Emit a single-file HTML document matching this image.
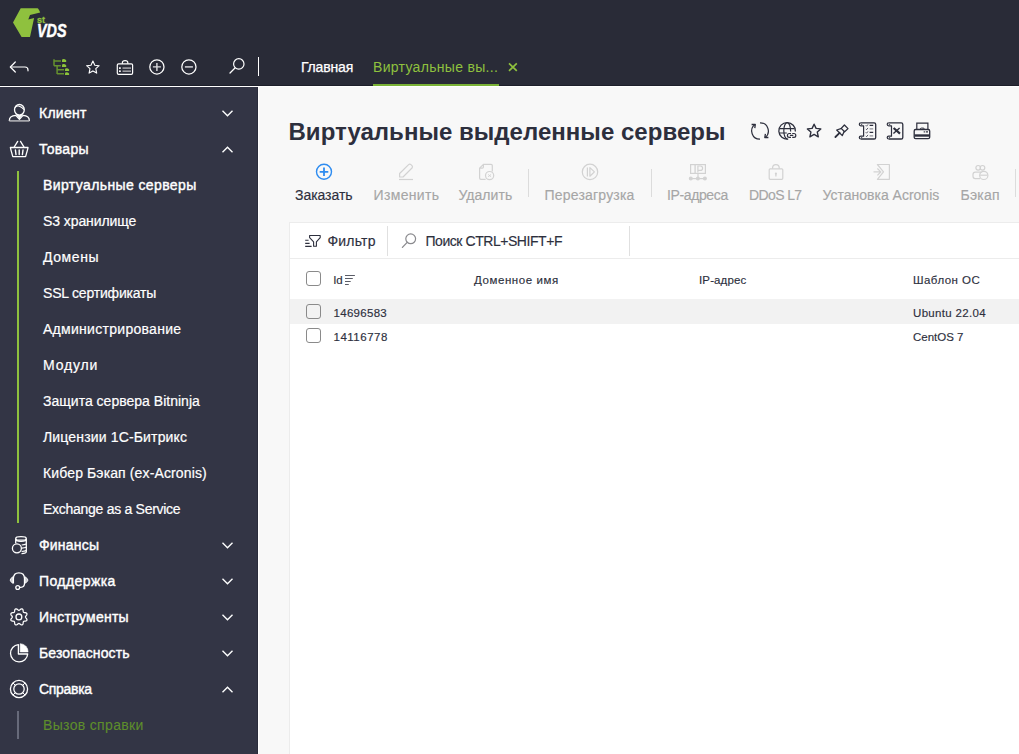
<!DOCTYPE html>
<html><head><meta charset="utf-8">
<style>
*{box-sizing:border-box;margin:0;padding:0}
html,body{width:1019px;height:754px;overflow:hidden;background:#fff;font-family:"Liberation Sans",sans-serif}
#top{position:absolute;left:0;top:0;width:1019px;height:86px;background:#292b37;border-bottom:1px solid #1d1f2a}
#side{position:absolute;left:0;top:87px;width:258px;height:667px;background:#333545;border-right:1px solid #2a2c3b}
#main{position:absolute;left:259px;top:87px;width:760px;height:667px;background:#f8f8f8}
.abs{position:absolute}
.ti{position:absolute;top:0}
.nav{position:absolute;left:39px;color:#fff;font-size:14px;-webkit-text-stroke:0.4px #fff;white-space:nowrap;line-height:16px}
.t{position:absolute;white-space:nowrap;line-height:1.143em;-webkit-text-stroke:0.15px currentColor}
.cb{position:absolute;width:15px;height:15px;border:1.3px solid #8a8a8a;border-radius:3px;background:transparent}
.sub{position:absolute;left:43px;color:#fff;font-size:14px;white-space:nowrap;line-height:16px;-webkit-text-stroke:0.2px currentColor}
</style></head><body>
<div id="top">
<svg class="abs" style="left:0;top:0" width="80" height="45" viewBox="0 0 80 45">
<path d="M20.7 8.2 L37.4 8.2 Q38.6 8.4 40.2 12.4 L30 15 L28.3 19.4 L34.1 18 L30 37 L21.6 37 L13 22.4 Z" fill="#8fc13e"/>
<text x="37" y="23.1" font-family="Liberation Sans" font-weight="bold" font-size="9.5" fill="#8fc13e" stroke="#8fc13e" stroke-width="0.3" textLength="8" lengthAdjust="spacingAndGlyphs">st</text>
<text x="37" y="36.9" font-family="Liberation Sans" font-weight="bold" font-style="italic" font-size="17.5" fill="#fff" stroke="#fff" stroke-width="0.5" textLength="29.5" lengthAdjust="spacingAndGlyphs">VDS</text>
</svg>
<svg class="abs" style="left:0;top:50px" width="270" height="36" viewBox="0 50 270 36" fill="none" stroke="#fff" stroke-width="1.3">
<!-- back arrow -->
<path d="M10.5 67 H25 Q28 67 28 70 V70.8" stroke-linecap="round" stroke-width="1.2"/>
<path d="M15.3 62 L10.3 67 L15.3 72" stroke-linecap="round" stroke-linejoin="round" stroke-width="1.2"/>
<!-- tree -->
<g stroke="#66922f" stroke-width="1.5">
<path d="M54 59.2 V65.8 M54 60.9 H60.9 M54 65.7 H60.9 M57.1 65.8 V74.1 M57.1 69.8 H64 M57.1 73.8 H64"/>
</g>
<g fill="#8cc43a" stroke="none">
<path d="M62 61.9 V60.4 Q62 59.1 63.6 59.1 Q65 59.1 66.2 60.3 V61.9 Z"/>
<path d="M62 66.9 V65.4 Q62 64.1 63.6 64.1 Q65 64.1 66.2 65.3 V66.9 Z"/>
<path d="M65 70.9 V69.5 Q65 68.2 66.6 68.2 Q68 68.2 69.1 69.4 V70.9 Z"/>
<path d="M65 74.9 V73.5 Q65 72.2 66.6 72.2 Q68 72.2 69.1 73.4 V74.9 Z"/>
</g>
<!-- star -->
<path d="M92.9 61.1 L94.8 65.3 L99.2 65.7 L95.8 68.7 L96.7 73.1 L92.9 70.9 L89.1 73.1 L90 68.7 L86.6 65.7 L91 65.3 Z" stroke-linejoin="round" stroke-width="1.1"/>
<!-- briefcase -->
<rect x="117.3" y="63.8" width="15.3" height="10.6" rx="1.3" stroke-width="1.2"/>
<path d="M122.4 63.8 V62.6 Q122.4 60.7 125.1 60.7 Q127.8 60.7 127.8 62.6 V63.8" stroke-width="1.2"/>
<g fill="#fff" stroke="none"><rect x="119" y="67.3" width="1.8" height="1.6"/><rect x="119" y="70.4" width="1.8" height="1.6"/></g>
<g fill="#9d9da3" stroke="none"><rect x="122.5" y="67.3" width="8.5" height="1.6"/><rect x="122.5" y="70.4" width="8.5" height="1.6"/></g>
<!-- plus -->
<circle cx="156.9" cy="66.9" r="7.1" stroke-width="1.25"/><path d="M156.9 62.9 V70.9 M152.9 66.9 H160.9" stroke-width="1.4" stroke="#dcdce0"/>
<!-- minus -->
<circle cx="188.9" cy="66.9" r="7.1" stroke-width="1.25"/><path d="M184.9 66.9 H192.9" stroke-width="1.5" stroke="#d4d4d8"/>
<!-- search -->
<circle cx="238.8" cy="63.9" r="5.2" stroke-width="1.2"/><path d="M235 68 L230 73" stroke-width="1.3" stroke-linecap="round"/>
<path d="M258.5 57 V76" stroke-width="1"/>
</svg>
<div class="abs" style="left:301px;top:59px;font-size:14px;color:#fff;-webkit-text-stroke:0.25px #fff;letter-spacing:-0.17px">Главная</div>
<div class="abs" style="left:373px;top:59px;font-size:14px;color:#8fc13e;letter-spacing:0.31px">Виртуальные вы...</div>
<svg class="abs" style="left:506px;top:61px" width="14" height="12"><path d="M3 2.3 L10.8 9.9 M10.8 2.3 L3 9.9" stroke="#8fc13e" stroke-width="1.7"/></svg>
<div class="abs" style="left:373px;top:84px;width:126px;height:2px;background:#7ab236"></div>
</div>
<div id="side">
<svg class="abs" style="left:0;top:0" width="40" height="667" viewBox="0 87 40 667" fill="none" stroke="#fff" stroke-width="1.3">
<!-- person -->
<ellipse cx="19.4" cy="109.8" rx="4.9" ry="5.3"/>
<path d="M15 107.6 Q16.8 105.6 18.6 106 Q21.5 106.8 24.2 109.6" stroke-width="1.1"/>
<path d="M9.3 121 Q9.3 115.6 15.8 115.4 L19.4 119.2 L23 115.4 Q29.4 115.6 29.4 121" stroke-linejoin="round"/>
<path d="M9.3 120.9 H29.4" stroke="#b8b8bc" stroke-width="1.5"/>
<path d="M16.3 114.6 L19.4 118.2 L22.5 114.6 Q19.4 116 16.3 114.6 Z" fill="#fff" stroke-width="0.8"/>
<!-- basket -->
<path d="M14.3 146.8 L17.7 141.4 M20.5 141.4 L23.9 146.8" stroke-linecap="round"/>
<path d="M10.4 147.5 H28 L27.5 149.8 L25.6 156.6 H12.8 L10.9 149.8 Z" stroke-linejoin="round"/>
<path d="M15.4 150 L16 154.6 M19.2 150 V154.6 M23 150 L22.4 154.6" stroke-width="1.4" stroke-linecap="round"/>
<!-- finance -->
<ellipse cx="21" cy="538.4" rx="5.3" ry="1.8" stroke-width="1.2"/>
<path d="M15.7 538.4 V543.4 M26.3 538.4 V551.8 Q26.3 553.4 21.5 553.6" stroke-width="1.3"/>
<path d="M15.8 540.4 Q21 542.6 26.2 540.4" stroke-width="1.2"/>
<path d="M21.6 545 Q24.5 544.8 26.2 544 M21.9 548.2 Q24.5 548 26.2 547.3 M21.6 551.5 Q24.5 551.3 26.2 550.6" stroke-width="1.2"/>
<circle cx="16.9" cy="548.3" r="4.5" stroke-width="1.3"/>
<!-- headset -->
<path d="M13.4 583.4 V578.6 Q13.4 572.8 18.9 572.8 Q24.5 572.8 24.5 578.6 V583.6 Q24.5 587.2 20.8 587.4 H19.7" stroke-width="1.3"/>
<path d="M12.8 576.8 Q10.2 578.6 10.2 580.1 Q10.2 581.7 12.8 583.2 Z M25.1 576.8 Q27.9 578.6 27.9 580.1 Q27.9 581.7 25.1 583.2 Z" fill="#c9c9cf" stroke-width="0.9" stroke-linejoin="round"/>
<circle cx="17.7" cy="587.5" r="1.9" stroke-width="1.3"/>
<!-- gear -->
<circle cx="18.9" cy="616.9" r="2.9" stroke-width="1.3"/>
<path d="M25.45 616.90 L25.53 617.25 L25.76 617.62 L26.09 618.04 L26.44 618.50 L26.75 619.00 L26.94 619.51 L26.95 619.99 L26.78 620.41 L26.43 620.74 L25.94 620.96 L25.37 621.10 L24.79 621.18 L24.26 621.24 L23.84 621.34 L23.53 621.53 L23.34 621.84 L23.24 622.26 L23.18 622.79 L23.10 623.37 L22.96 623.94 L22.74 624.43 L22.41 624.78 L21.99 624.95 L21.51 624.94 L21.00 624.75 L20.50 624.44 L20.04 624.09 L19.62 623.76 L19.25 623.53 L18.90 623.45 L18.55 623.53 L18.18 623.76 L17.76 624.09 L17.30 624.44 L16.80 624.75 L16.29 624.94 L15.81 624.95 L15.39 624.78 L15.06 624.43 L14.84 623.94 L14.70 623.37 L14.62 622.79 L14.56 622.26 L14.46 621.84 L14.27 621.53 L13.96 621.34 L13.54 621.24 L13.01 621.18 L12.43 621.10 L11.86 620.96 L11.37 620.74 L11.02 620.41 L10.85 619.99 L10.86 619.51 L11.05 619.00 L11.36 618.50 L11.71 618.04 L12.04 617.62 L12.27 617.25 L12.35 616.90 L12.27 616.55 L12.04 616.18 L11.71 615.76 L11.36 615.30 L11.05 614.80 L10.86 614.29 L10.85 613.81 L11.02 613.39 L11.37 613.06 L11.86 612.84 L12.43 612.70 L13.01 612.62 L13.54 612.56 L13.96 612.46 L14.27 612.27 L14.46 611.96 L14.56 611.54 L14.62 611.01 L14.70 610.43 L14.84 609.86 L15.06 609.37 L15.39 609.02 L15.81 608.85 L16.29 608.86 L16.80 609.05 L17.30 609.36 L17.76 609.71 L18.18 610.04 L18.55 610.27 L18.90 610.35 L19.25 610.27 L19.62 610.04 L20.04 609.71 L20.50 609.36 L21.00 609.05 L21.51 608.86 L21.99 608.85 L22.41 609.02 L22.74 609.37 L22.96 609.86 L23.10 610.43 L23.18 611.01 L23.24 611.54 L23.34 611.96 L23.53 612.27 L23.84 612.46 L24.26 612.56 L24.79 612.62 L25.37 612.70 L25.94 612.84 L26.43 613.06 L26.78 613.39 L26.95 613.81 L26.94 614.29 L26.75 614.80 L26.44 615.30 L26.09 615.76 L25.76 616.18 L25.53 616.55 Z" stroke-width="1.25" stroke-linejoin="round"/>
<!-- pie -->
<path d="M18.4 644.7 A8.6 8.6 0 1 0 27.7 654 H18.4 Z" stroke-linejoin="round"/>
<path d="M20.2 643.7 A8.1 8.1 0 0 1 28.1 651.9 H20.2 Z" fill="#fff" stroke-width="0.6"/>
<!-- lifebuoy -->
<circle cx="19" cy="689" r="8.6"/>
<circle cx="19" cy="689" r="5.2"/>
<path d="M13 683 L15.3 685.3 M25 683 L22.7 685.3 M13 695 L15.3 692.7 M25 695 L22.7 692.7" stroke-width="1"/>
</svg>
<svg class="abs" style="left:215px;top:0" width="30" height="667" viewBox="215 87 30 667" fill="none" stroke="#fff" stroke-width="1.35">
<path d="M222.5 110.8 L227.5 115.8 L232.5 110.8"/>
<path d="M222.5 152.2 L227.5 147.2 L232.5 152.2"/>
<path d="M222.5 542.8 L227.5 547.8 L232.5 542.8"/>
<path d="M222.5 578.8 L227.5 583.8 L232.5 578.8"/>
<path d="M222.5 614.8 L227.5 619.8 L232.5 614.8"/>
<path d="M222.5 650.8 L227.5 655.8 L232.5 650.8"/>
<path d="M222.5 692.2 L227.5 687.2 L232.5 692.2"/>
</svg>
<div class="abs" style="left:17px;top:84px;width:2px;height:352px;background:#8fc13e"></div>
<div class="abs" style="left:17px;top:624px;width:2px;height:28px;background:#676a7a"></div>
<div class="nav" style="top:18px;letter-spacing:0.268px">Клиент</div>
<div class="nav" style="top:54px;letter-spacing:0.281px">Товары</div>
<div class="nav" style="top:450px;letter-spacing:0.198px">Финансы</div>
<div class="nav" style="top:486px;letter-spacing:0.406px">Поддержка</div>
<div class="nav" style="top:522px;letter-spacing:0.237px">Инструменты</div>
<div class="nav" style="top:558px;letter-spacing:0.108px">Безопасность</div>
<div class="nav" style="top:594px;letter-spacing:-0.306px">Справка</div>
<div class="sub" style="top:90px;letter-spacing:0.389px;-webkit-text-stroke:0.4px #fff">Виртуальные серверы</div>
<div class="sub" style="top:126px;letter-spacing:-0.081px">S3 хранилище</div>
<div class="sub" style="top:162px;letter-spacing:0.587px">Домены</div>
<div class="sub" style="top:198px;letter-spacing:-0.194px">SSL сертификаты</div>
<div class="sub" style="top:234px;letter-spacing:0.287px">Администрирование</div>
<div class="sub" style="top:270px;letter-spacing:0.814px">Модули</div>
<div class="sub" style="top:306px;letter-spacing:0.012px">Защита сервера Bitninja</div>
<div class="sub" style="top:342px;letter-spacing:0.155px">Лицензии 1С-Битрикс</div>
<div class="sub" style="top:378px;letter-spacing:0.126px">Кибер Бэкап (ex-Acronis)</div>
<div class="sub" style="top:414px;letter-spacing:-0.28px">Exchange as a Service</div>
<div class="sub" style="top:630px;color:#5e8d2c;letter-spacing:0.334px;-webkit-text-stroke:0.1px #5e8d2c">Вызов справки</div>
</div>
<div id="main"></div>
<div class="abs" style="left:289px;top:222px;width:730px;height:532px;background:#fff;border-left:1px solid #ececec;border-top:1px solid #ececec"></div>
<div class="abs" style="left:290px;top:258px;width:729px;height:1px;background:#ececec"></div>
<div class="abs" style="left:290px;top:299px;width:729px;height:25px;background:#f2f2f2"></div>
<div class="t" style="left:288.5px;top:118px;font-size:24px;font-weight:bold;letter-spacing:0.03px;-webkit-text-stroke:0;color:#2d2f3d">Виртуальные выделенные серверы</div>
<svg class="abs" style="left:740px;top:115px" width="200" height="30" viewBox="740 115 200 30" fill="none" stroke="#2d2f3d" stroke-width="1.3">
<!-- refresh -->
<path d="M754.9 124.5 A8.2 8.2 0 0 0 760 139.2" stroke-width="1.2"/>
<path d="M751.6 124.5 H755.3 L754.8 128.2" stroke-linejoin="round"/>
<path d="M760 122.8 A8.2 8.2 0 0 1 765.1 137.5" stroke-width="1.2"/>
<path d="M768.4 137.5 H764.8 L765.4 133.8" stroke-linejoin="round"/>
<!-- globe -->
<path d="M795.4 131.5 A8.3 8.3 0 1 0 788.2 139.1" stroke-width="1.25"/>
<path d="M790.6 131.6 V130.8 A3.4 8.1 0 0 0 783.8 130.8 A3.4 8.1 0 0 0 787.5 138.9" stroke-width="1.2"/>
<path d="M779.6 128.6 H794.4 M779.3 133 H786.8" stroke-width="1.2"/>
<path d="M791 133.5 H789.3 Q787.4 133.5 787.4 135.4 Q787.4 137.3 789.3 137.3 H791 M792.2 133.5 H793.9 Q795.8 133.5 795.8 135.4 Q795.8 137.3 793.9 137.3 H792.2 M789.9 135.4 H793.3" stroke-width="1.2"/>
<!-- star -->
<path d="M814.1 124.2 L816.1 128.4 L820.8 128.9 L817.3 132.1 L818.3 136.8 L814.1 134.4 L809.9 136.8 L810.9 132.1 L807.4 128.9 L812.1 128.4 Z" stroke-linejoin="round" stroke-width="1.4"/>
<!-- pin -->
<path d="M839.6 132.8 L835.4 137" stroke-width="1.8" stroke-linecap="round"/>
<path d="M841.6 128.3 L836.7 130 L842.3 135.6 L844.3 131.2" stroke-linejoin="round" stroke-width="1.3"/>
<path d="M844.4 125 L848 128.6 L844.6 131.8 L841.2 128.4 Z" stroke-linejoin="round" stroke-width="1.3"/>
<!-- checklist scroll -->
<path d="M860.8 122.8 H874.1 Q875.7 122.8 875.7 124.4 V137.4 Q875.7 139 874.1 139 H860.8" stroke-width="1.3"/>
<path d="M860.8 122.8 Q859.3 122.8 859.3 124.3 Q859.3 125.8 860.8 125.8 H863.6 V136.2 H860.8 Q859.3 136.2 859.3 137.6 Q859.3 139 860.8 139" stroke-width="1.2" stroke-linejoin="round"/>
<path d="M860.6 124.9 L861.6 123.9 L862.6 124.9 Z M860.6 137.1 L861.6 138.1 L862.6 137.1 Z" fill="#2d2f3d" stroke="none"/>
<g stroke-width="0.8"><path d="M865.8 125.4 L866.6 126.2 L868 124.4 M865.8 128.9 L866.6 129.7 L868 127.9 M865.8 132.4 L866.6 133.2 L868 131.4 M865.8 135.9 L866.6 136.7 L868 134.9"/></g>
<path d="M869.6 125.4 H873.2 M869.6 132.4 H873.2" stroke-width="1.1"/>
<path d="M869.6 128.9 H873.2 M869.6 135.9 H873.2" stroke-width="1.1" stroke="#8d8e96"/>
<!-- excel scroll -->
<path d="M888.7 122.8 H901.2 Q902.8 122.8 902.8 124.4 V137.4 Q902.8 139 901.2 139 H888.7" stroke-width="1.3"/>
<path d="M888.7 122.8 Q887.2 122.8 887.2 124.3 Q887.2 125.8 888.7 125.8 H891.5 V136.2 H888.7 Q887.2 136.2 887.2 137.6 Q887.2 139 888.7 139" stroke-width="1.2" stroke-linejoin="round"/>
<path d="M888.5 124.9 L889.5 123.9 L890.5 124.9 Z M888.5 137.1 L889.5 138.1 L890.5 137.1 Z" fill="#2d2f3d" stroke="none"/>
<path d="M893.6 128 L900 133.6" stroke-width="2.2"/>
<path d="M899.6 128 L893.4 133.6" stroke-width="1.4"/>
<!-- printer -->
<path d="M916.8 129.5 V123.2 H927.9 V129.5" stroke-width="1.2"/>
<path d="M915.6 129.5 H928.2 Q929.7 129.5 929.7 131 V137.2 Q929.7 138.6 928.2 138.6 H915.6 Q914.2 138.6 914.2 137.2 V131 Q914.2 129.5 915.6 129.5 Z" stroke-width="1.3"/>
<path d="M914.5 135.5 H929.5" stroke-width="2.4"/>
<path d="M920.2 129.5 Q920.2 128.1 921.4 128.1 H923.2 Q924.4 128.1 924.4 129.5" stroke-width="1"/>
<path d="M923.7 131.9 H924.9 M925.8 131.9 H928" stroke-width="1.1"/>
</svg>
<!-- toolbar -->
<svg class="abs" style="left:290px;top:155px" width="729" height="50" viewBox="290 155 729 50" fill="none" stroke="#d2d2d2" stroke-width="1.2">
<circle cx="324" cy="171.8" r="7.5" stroke="#2e8cf0" stroke-width="1.4"/>
<path d="M319.7 171.8 H328.3 M324 167.5 V176.1" stroke="#2e8cf0" stroke-width="1.8"/>
<!-- pencil -->
<path d="M399.6 177 V173.5 L408.6 164.6 Q409.8 163.6 410.9 164.6 L412 165.7 Q413 166.8 412 168 L403 177 Z" stroke-linejoin="round"/>
<path d="M399 179.5 H413"/>
<!-- delete doc -->
<path d="M483.4 164.3 H491 Q492.3 164.3 492.3 165.6 V171.4 M485.6 179.3 H481 Q479.6 179.3 479.6 177.9 V168.1 L483.4 164.3 V167 Q483.4 168.1 482.3 168.1 H479.6" stroke-linejoin="round"/>
<circle cx="489.6" cy="175.6" r="4.1"/>
<path d="M488.1 174.4 L491.1 176.8 M491.1 174.4 L488.1 176.8" stroke-width="0.9"/>
<!-- restart -->
<circle cx="590" cy="171.9" r="7.7"/>
<path d="M587.4 167.4 V176.4"/><path d="M589.9 167.6 L594.4 171.9 L589.9 176.2 Z" stroke-linejoin="round"/>
<!-- IP -->
<rect x="690.6" y="164.6" width="14.8" height="8.8" stroke-width="1.2"/>
<path d="M695.1 164.8 V173.2" stroke-width="1.3"/>
<path d="M697.9 172.6 V166 H700.4 Q702.6 166 702.6 168.2 Q702.6 170.4 700.4 170.4 H697.9" stroke-width="1.2"/>
<path d="M691 178.6 H705 M698 173.5 V178.6" stroke-width="1.2"/>
<circle cx="690.8" cy="178.6" r="1.4" fill="#d2d2d2"/><circle cx="697.9" cy="178.6" r="1.4" fill="#d2d2d2"/><circle cx="704.9" cy="178.6" r="1.4" fill="#d2d2d2"/>
<!-- lock -->
<rect x="769.2" y="168.8" width="13.6" height="10.5" rx="1" stroke-width="1.2"/>
<path d="M772.6 168.8 V167.8 Q772.6 164.6 775.9 164.6 Q779.2 164.6 779.2 167.8 V168.8" stroke-width="1.2"/>
<path d="M775.9 173.6 V176.6" stroke-width="1.3"/><circle cx="775.9" cy="173.6" r="1.1" fill="#d2d2d2" stroke="none"/>
<!-- install -->
<path d="M877.4 164.5 H889.4 V179.3 H877.4 L883.5 171.9 Z" stroke-linejoin="round"/>
<path d="M873.5 171.9 H880.6 M877.4 168.5 L880.8 171.9 L877.4 175.3"/>
<!-- backup -->
<circle cx="978.2" cy="167.8" r="2.3"/><circle cx="982.5" cy="167.8" r="2.3"/>
<path d="M980 178.6 H975.3 Q973 178.6 973 176.3 V174.4 Q973 172.1 975.3 172.1 H981.5"/>
<circle cx="983.8" cy="175.4" r="4.1"/>
<path d="M980.2 175.2 H987.4"/>
</svg>
<div class="abs" style="left:528px;top:169px;width:1px;height:28px;background:#dcdcdc"></div>
<div class="abs" style="left:651px;top:169px;width:1px;height:28px;background:#dcdcdc"></div>
<div class="abs" style="left:1015px;top:169px;width:1px;height:28px;background:#dcdcdc"></div>
<div class="t" style="left:295px;top:187px;font-size:14px;color:#2d2f3d;letter-spacing:-0.05px">Заказать</div>
<div class="t" style="left:373.5px;top:187px;font-size:14px;color:#a6a6a6;letter-spacing:0.35px">Изменить</div>
<div class="t" style="left:458.5px;top:187px;font-size:14px;color:#a6a6a6;letter-spacing:0.04px">Удалить</div>
<div class="t" style="left:544.5px;top:187px;font-size:14px;color:#a6a6a6;letter-spacing:0.2px">Перезагрузка</div>
<div class="t" style="left:667px;top:187px;font-size:14px;color:#a6a6a6;letter-spacing:-0.38px">IP-адреса</div>
<div class="t" style="left:749px;top:187px;font-size:14px;color:#a6a6a6;letter-spacing:-0.62px">DDoS L7</div>
<div class="t" style="left:822.5px;top:187px;font-size:14px;color:#a6a6a6;letter-spacing:0px">Установка Acronis</div>
<div class="t" style="left:960.5px;top:187px;font-size:14px;color:#a6a6a6;letter-spacing:0.24px">Бэкап</div>
<!-- filter bar -->
<svg class="abs" style="left:295px;top:225px" width="140" height="30" viewBox="295 225 140 30" fill="none" stroke="#2d2f3d" stroke-width="1.2">
<path d="M309.6 235.5 H320.2 V237.6 L316.4 241.8 V246.3 H313.6 V241.8 L309.6 237.6 Z" stroke-linejoin="round" stroke-width="1.1"/>
<path d="M305.2 240.2 H308.6 M305.2 243.4 H309.6 M305.2 246.4 H311.6" stroke-width="1.1"/>
<circle cx="410.7" cy="238.8" r="4.9" stroke="#8a8a8e" stroke-width="1.2"/>
<path d="M407.2 242.4 L402.4 247.4" stroke="#8a8a8e" stroke-width="1.3" stroke-linecap="round"/>
</svg>
<div class="t" style="left:327.5px;top:233px;font-size:14px;color:#2d2f3d;letter-spacing:0.19px">Фильтр</div>
<div class="abs" style="left:387px;top:226px;width:1px;height:30px;background:#e0e0e0"></div>
<div class="t" style="left:425.5px;top:232.5px;font-size:14px;color:#2d2f3d;letter-spacing:-0.45px">Поиск CTRL+SHIFT+F</div>
<div class="abs" style="left:629px;top:226px;width:1px;height:30px;background:#e0e0e0"></div>
<!-- table -->
<div class="cb" style="left:306px;top:271px"></div>
<div class="cb" style="left:306px;top:304px"></div>
<div class="cb" style="left:306px;top:328px"></div>
<div class="t" style="left:333.3px;top:274.2px;font-size:11.5px;color:#2d2f3d;letter-spacing:-0.2px">Id</div>
<svg class="abs" style="left:340px;top:270px" width="20" height="20" viewBox="340 270 20 20" stroke="#2d2f3d" stroke-width="1">
<path d="M345 275.5 H354.9 M345 278.5 H352.8 M345 281.5 H350.7 M345 284.5 H348.8" stroke="#5a5c66"/>
</svg>
<div class="t" style="left:474px;top:274.4px;font-size:11.5px;color:#2d2f3d;letter-spacing:0.58px">Доменное имя</div>
<div class="t" style="left:699px;top:274.4px;font-size:11.5px;color:#2d2f3d;letter-spacing:0.13px">IP-адрес</div>
<div class="t" style="left:913px;top:274.4px;font-size:11.5px;color:#2d2f3d;letter-spacing:0.46px">Шаблон ОС</div>
<div class="t" style="left:333.5px;top:307.1px;font-size:11.5px;color:#2d2f3d;letter-spacing:0.3px">14696583</div>
<div class="t" style="left:913px;top:306.8px;font-size:11.5px;color:#2d2f3d;letter-spacing:0.33px">Ubuntu 22.04</div>
<div class="t" style="left:333.5px;top:331px;font-size:11.5px;color:#2d2f3d;letter-spacing:0.5px">14116778</div>
<div class="t" style="left:913px;top:330.8px;font-size:11.5px;color:#2d2f3d;letter-spacing:0px">CentOS 7</div>

</body></html>
